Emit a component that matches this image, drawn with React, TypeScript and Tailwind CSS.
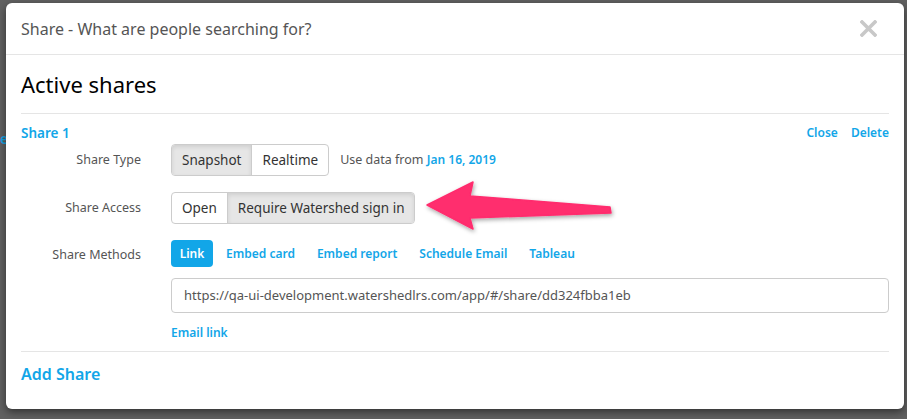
import React from 'react';

const font = { fontFamily: '"Noto Sans", "Liberation Sans", sans-serif' };

const methods = ['Embed card', 'Embed report', 'Schedule Email', 'Tableau'];

const Arrow = () => (
  <svg
    className="absolute left-[421px] top-[176px] overflow-visible"
    width="200"
    height="60"
    viewBox="421 176 200 60"
  >
    <defs>
      <filter id="sh" x="-20%" y="-50%" width="140%" height="200%">
        <feDropShadow dx="1" dy="2" stdDeviation="2" floodColor="#000" floodOpacity="0.35" />
      </filter>
    </defs>
    <polygon
      points="427,205 473,182 470,196 610,207 611,213 470,218 473,229"
      fill="#ff2d6e"
      stroke="#ff2d6e"
      strokeWidth="1.5"
      strokeLinejoin="round"
      filter="url(#sh)"
    />
  </svg>
);

export default function App() {
  return (
    <div className="relative w-[907px] h-[419px] overflow-hidden bg-[#616161]" style={font}>
      <span className="absolute left-0 top-[128px] text-[14px] font-semibold text-[#12a6e8]">e</span>

      <div className="absolute left-[6px] top-[3px] w-[898px] h-[406px] bg-white rounded-[6px] shadow-[0_3px_9px_rgba(0,0,0,0.5)] flex flex-col">
        {/* header */}
        <div className="h-[52px] flex items-center justify-between pl-[15px] pr-[27px] border-b border-[#e5e5e5]">
          <span className="text-[16px] text-[#555]">Share - What are people searching for?</span>
          <svg width="17" height="17" viewBox="0 0 17 17" className="-mt-[1px]">
            <path d="M2 2 L15 15 M15 2 L2 15" stroke="#c8c8c8" strokeWidth="3.6" strokeLinecap="square" />
          </svg>
        </div>

        <div className="flex flex-col px-[15px] flex-1">
          <div className="h-[59px] flex items-center border-b border-[#e5e5e5]">
            <span className="text-[22px] text-black">Active shares</span>
          </div>

          <div className="flex items-center justify-between mt-[9px] h-[20px]">
            <span className="text-[13.5px] font-semibold text-[#12a6e8]">Share 1</span>
            <div className="flex gap-[13px] text-[12px] font-semibold text-[#12a6e8]">
              <span>Close</span>
              <span>Delete</span>
            </div>
          </div>

          {/* Share Type */}
          <div className="flex items-center mt-[1px] h-[32px]">
            <span className="w-[120px] text-right text-[12.5px] text-[#555]">Share Type</span>
            <div className="ml-[30px] flex h-[32px] border border-[#ccc] rounded-[4px] text-[13.5px] text-[#333]">
              <span className="px-[10px] flex items-center bg-[#e6e6e6] shadow-[inset_0_2px_4px_rgba(0,0,0,0.1)] rounded-l-[3px] border-r border-[#ccc]">Snapshot</span>
              <span className="px-[10px] flex items-center">Realtime</span>
            </div>
            <span className="ml-[11px] text-[12.5px] text-[#555]">
              Use data from <span className="text-[12px] font-semibold text-[#12a6e8]">Jan 16, 2019</span>
            </span>
          </div>

          {/* Share Access */}
          <div className="flex items-center mt-[16px] h-[32px]">
            <span className="w-[120px] text-right text-[12.5px] text-[#555]">Share Access</span>
            <div className="ml-[30px] flex h-[32px] border border-[#ccc] rounded-[4px] text-[13.5px] text-[#333]">
              <span className="px-[10px] flex items-center border-r border-[#ccc]">Open</span>
              <span className="px-[10px] flex items-center bg-[#e6e6e6] shadow-[inset_0_2px_4px_rgba(0,0,0,0.1)] rounded-r-[3px]">Require Watershed sign in</span>
            </div>
          </div>

          {/* Share Methods */}
          <div className="flex items-center mt-[16px] h-[27px]">
            <span className="w-[120px] text-right text-[12.5px] text-[#555] mt-[3px]">Share Methods</span>
            <div className="ml-[30px] flex items-center text-[12px] font-semibold text-[#12a6e8]">
              <span className="h-[27px] w-[42px] justify-center flex items-center rounded-[4px] bg-[#12a6e8] text-white">Link</span>
              <div className="ml-[13px] flex items-center gap-[22px]">
                {methods.map(m => (
                  <span key={m}>{m}</span>
                ))}
              </div>
            </div>
          </div>

          <div className="ml-[150px] mt-[11px] h-[35px] border border-[#ccc] rounded-[4px] flex items-center px-[12px] text-[13px] text-[#555]">
            https://qa-ui-development.watershedlrs.com/app/#/share/dd324fbba1eb
          </div>
          <span className="ml-[150px] mt-[11px] text-[12px] font-semibold text-[#12a6e8]">Email link</span>

          <div className="mt-[9px] border-b border-[#e5e5e5]" />
          <span className="mt-[10px] text-[16px] font-semibold text-[#12a6e8]">Add Share</span>
        </div>
      </div>

      <Arrow />
    </div>
  );
}
